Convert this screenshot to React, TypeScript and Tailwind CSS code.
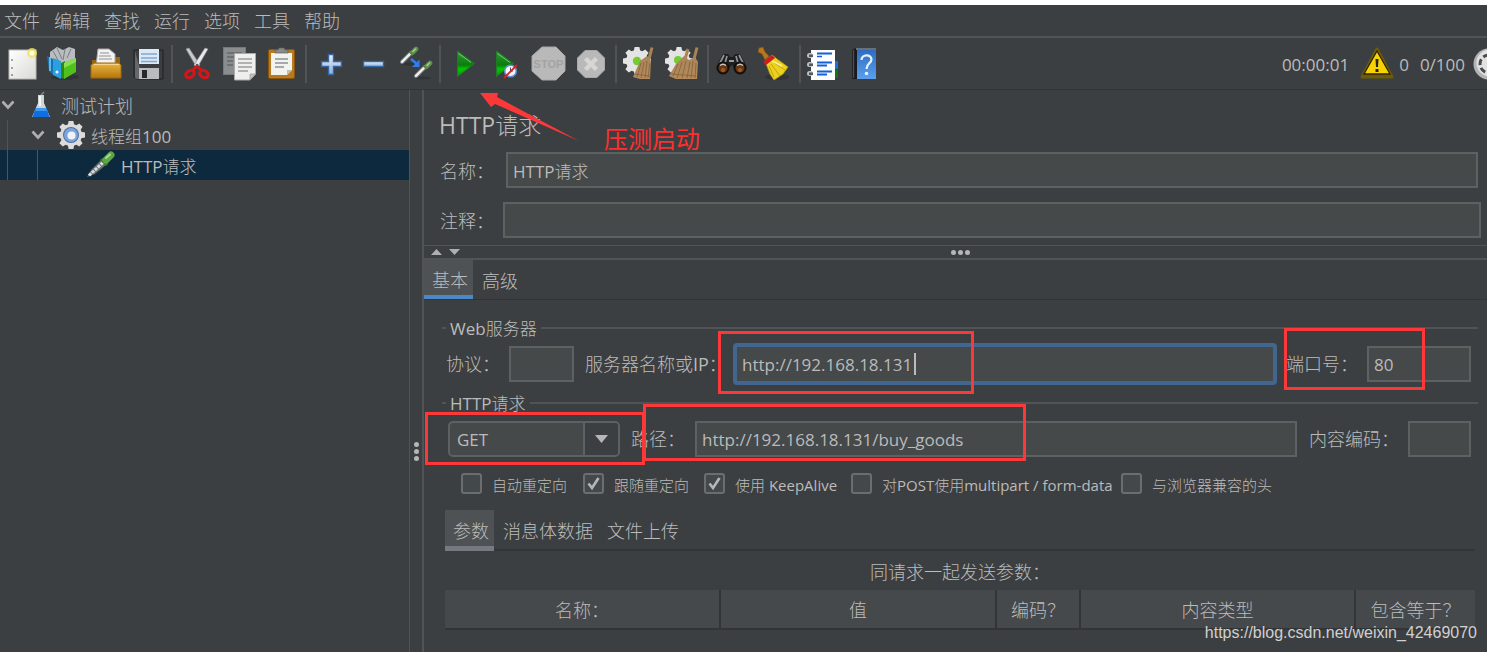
import React from "react";

type Kids = { children: React.ReactNode };

function Icon({ children }: Kids) {
  return (
    <svg width="36" height="36" viewBox="0 0 36 36" aria-hidden="true" className="shrink-0">
      {children}
    </svg>
  );
}

function Gradients() {
  return (
    <svg width="0" height="0" className="absolute" aria-hidden="true">
      <defs>
        <linearGradient id="paper" x1="0" y1="0" x2="1" y2="1">
          <stop offset="0" stopColor="#ffffff" />
          <stop offset="1" stopColor="#d9d9d5" />
        </linearGradient>
        <linearGradient id="green" x1="0" y1="0" x2="0" y2="1">
          <stop offset="0" stopColor="#2f9a35" />
          <stop offset="0.55" stopColor="#0a7d0a" />
          <stop offset="0.7" stopColor="#06c406" />
          <stop offset="1" stopColor="#0a8f0a" />
        </linearGradient>
        <linearGradient id="folder" x1="0" y1="0" x2="0" y2="1">
          <stop offset="0" stopColor="#e9b548" />
          <stop offset="1" stopColor="#b77508" />
        </linearGradient>
        <linearGradient id="steel" x1="0" y1="0" x2="0" y2="1">
          <stop offset="0" stopColor="#e8f0fa" />
          <stop offset="1" stopColor="#8db0dc" />
        </linearGradient>
        <linearGradient id="broom" x1="0" y1="0" x2="0" y2="1">
          <stop offset="0" stopColor="#a8855a" />
          <stop offset="1" stopColor="#b58a5b" />
        </linearGradient>
        <linearGradient id="book" x1="0" y1="0" x2="0" y2="1">
          <stop offset="0" stopColor="#2f6cc0" />
          <stop offset="1" stopColor="#5aa0ee" />
        </linearGradient>
      </defs>
    </svg>
  );
}

const gearTeeth = [0, 45, 90, 135, 180, 225, 270, 315];

function Gear({ cx, cy, r, fill = "#e4e4e4" }: { cx: number; cy: number; r: number; fill?: string }) {
  return (
    <g fill={fill}>
      <circle cx={cx} cy={cy} r={r * 0.78} />
      {gearTeeth.map((a) => (
        <path
          key={a}
          d={`M${cx - r * 0.25} ${cy - r * 0.6}L${cx - r * 0.17} ${cy - r}H${cx + r * 0.17}L${cx + r * 0.25} ${cy - r * 0.6}Z`}
          transform={`rotate(${a} ${cx} ${cy})`}
        />
      ))}
    </g>
  );
}

function Dropper({ x, y }: { x: number; y: number }) {
  return (
    <g transform={`translate(${x} ${y})`}>
      <ellipse cx="8" cy="17" rx="8" ry="1.5" fill="#2b2d2f" opacity="0.6" />
      <path d="M1 15L10 6" stroke="#6f7477" strokeWidth="4.4" strokeLinecap="round" />
      <path d="M1 14.800L10 5.800" stroke="#eceeee" strokeWidth="2.600" strokeLinecap="round" />
      <path d="M8.500 4.500L12 8" stroke="#4a7a3c" strokeWidth="2.400" />
      <path d="M11.500 5.500L15 2" stroke="#5d8f4c" strokeWidth="4.600" strokeLinecap="round" />
      <path d="M12 4.500L14.500 2" stroke="#a3cf8c" strokeWidth="1.600" strokeLinecap="round" />
    </g>
  );
}

const NewIcon = () => (
  <Icon>
    <rect x="6" y="4" width="27" height="29" fill="url(#paper)" stroke="#b9b9b5" />
    <path d="M9 13v2M9 21v2M9 28v2" stroke="#555" />
    <circle cx="29" cy="7" r="5" fill="#f0e35a" opacity="0.8" />
    <circle cx="29" cy="7" r="2.600" fill="#fffde0" />
  </Icon>
);

const TemplatesIcon = () => (
  <Icon>
    <ellipse cx="20" cy="31" rx="14" ry="3" fill="#2a2c2e" opacity="0.6" />
    <path d="M5 6L12 1L18 4L24 1L30 3V15L17 22L5 14Z" fill="#b9bdbf" />
    <path d="M8 5L13 14M12 2L17 13M20 3L18 14M26 3L22 12" stroke="#787d80" />
    <path d="M2 10L8 13V29L4 25Z" fill="#1672b0" />
    <path d="M8 12L16 15V33L8 29Z" fill="#2ba0e0" />
    <path d="M5 11V25" stroke="#7fd0f5" strokeWidth="1.500" />
    <circle cx="12" cy="26" r="1.500" fill="#eaf7ff" />
    <path d="M16 17L20 15V33L16 32Z" fill="#2c8a12" />
    <path d="M19 17L31 12V26L19 33Z" fill="#4fc01c" />
    <path d="M19 17L31 12V16L19 22Z" fill="#86df4e" />
  </Icon>
);

const OpenIcon = () => (
  <Icon>
    <path d="M5 14h6l2-3h20v14H5Z" fill="#9a6410" />
    <path d="M11 3H22L28 8V20H9Z" fill="#f3f3f1" stroke="#a9a9a5" />
    <path d="M13 7h9M12 10h12M12 13h13" stroke="#8f9294" />
    <path d="M7 17H32L34 19V32H4V19Z" fill="url(#folder)" stroke="#a26a0a" />
    <path d="M7 18.500H32" stroke="#f7d68a" />
  </Icon>
);

const SaveIcon = () => (
  <Icon>
    <path d="M5 4H34V33H7L5 31Z" fill="#3b3d40" stroke="#1f2022" />
    <path d="M6 5L14 33H7L6 32Z" fill="#77797b" opacity="0.7" />
    <rect x="10" y="3" width="20" height="15" fill="#dbe9f6" />
    <path d="M12 8H28M12 12H28M12 15.500H28" stroke="#84a8d0" strokeWidth="1.500" />
    <rect x="10" y="22" width="20" height="11" fill="#b9bbbd" />
    <rect x="13" y="24" width="5" height="8" fill="#26282a" />
  </Icon>
);

const CutIcon = () => (
  <Icon>
    <path d="M7 3L10 2L21 19L18 22Z" fill="#c9cbcb" stroke="#8d8f8f" strokeWidth="0.700" />
    <path d="M29 3L26 2L15 19L18 22Z" fill="#e8eaea" stroke="#8d8f8f" strokeWidth="0.700" />
    <ellipse cx="11" cy="28" rx="4.500" ry="3.400" transform="rotate(-30 11 28)" fill="none" stroke="#d3161a" strokeWidth="3.200" />
    <ellipse cx="25" cy="28" rx="4.500" ry="3.400" transform="rotate(30 25 28)" fill="none" stroke="#d3161a" strokeWidth="3.200" />
    <path d="M14 24L18 20L22 24" fill="none" stroke="#d3161a" strokeWidth="3" />
    <circle cx="18" cy="19" r="1.200" fill="#555" />
  </Icon>
);

const CopyIcon = () => (
  <Icon>
    <rect x="2.500" y="1.500" width="22" height="27" fill="#8b8e8e" stroke="#777a7a" />
    <path d="M6 7H21M6 11H14M6 15H12M6 19H12" stroke="#65686a" strokeWidth="1.500" />
    <path d="M13.500 7.500H34.500V28L29 34H13.500Z" fill="#efefed" stroke="#aaa" />
    <path d="M17 13H31M17 17H31M17 21H31M17 25H27" stroke="#9da0a0" strokeWidth="1.500" />
    <path d="M29 34V28H34.500Z" fill="#c3c3bf" stroke="#999" strokeWidth="0.700" />
  </Icon>
);

const PasteIcon = () => (
  <Icon>
    <rect x="5.500" y="3.500" width="26" height="29" rx="1.500" fill="#b9791f" stroke="#8a560d" />
    <path d="M8 7H29V24L24 29H8Z" fill="#f2f2ef" />
    <path d="M12 13H25M12 17H25M12 21H21" stroke="#8f9294" strokeWidth="1.500" />
    <path d="M24 29V24H29Z" fill="#bdbdb8" />
    <path d="M12 7V4H15L16 2H21L22 4H25V7Z" fill="#8a8c8a" stroke="#5c5e5c" strokeWidth="0.700" />
  </Icon>
);

const PlusIcon = () => (
  <Icon>
    <path
      d="M15.500 8.500H20.500V15.500H28.500V20.500H20.500V28.500H15.500V20.500H8.500V15.500H15.500Z"
      fill="url(#steel)"
      stroke="#3465a4"
      strokeWidth="1.400"
    />
  </Icon>
);

const MinusIcon = () => (
  <Icon>
    <rect x="8.500" y="15.500" width="20" height="5" fill="url(#steel)" stroke="#3465a4" strokeWidth="1.400" />
  </Icon>
);

const ToggleIcon = () => (
  <Icon>
    <Dropper x={4} y={1} />
    <Dropper x={18} y={15} />
    <path d="M14 13L20 18" stroke="#2f7df0" strokeWidth="2.600" />
    <path d="M22.500 13.500V21H15Z" fill="#2f7df0" />
  </Icon>
);

const StartIcon = () => (
  <Icon>
    <path d="M10.500 5L27.500 17.500L10.500 30.500Z" fill="url(#green)" stroke="#1f7a24" />
    <path d="M11.500 7.500L24 16.500" stroke="#7cc780" />
  </Icon>
);

const StartNoTimersIcon = () => (
  <Icon>
    <path d="M7.500 5L24.500 17.500L7.500 30.500Z" fill="url(#green)" stroke="#1f7a24" />
    <path d="M8.500 7.500L21 16.500" stroke="#7cc780" />
    <circle cx="21.500" cy="25" r="5.800" fill="#f4f6fa" stroke="#5a90cf" strokeWidth="1.600" />
    <path d="M21.500 21.500V25H24" stroke="#456" fill="none" />
    <path d="M15 32L28 19" stroke="#d3202a" strokeWidth="1.800" />
  </Icon>
);

const StopIcon = () => (
  <Icon>
    <path d="M11 1H25L34 10V25L25 34H11L1 25V10Z" fill="#b9b9b9" stroke="#a8a8a8" />
    <text x="17.500" y="22" textAnchor="middle" fontSize="11" fontWeight="700" fill="#a3a3a3" fontFamily="Liberation Sans, sans-serif">
      STOP
    </text>
  </Icon>
);

const ShutdownIcon = () => (
  <Icon>
    <path d="M12 4.500H24L31.500 12V24L24 31.500H12L4.500 24V12Z" fill="#b9b9b9" stroke="#a8a8a8" />
    <path d="M12.500 12.500L23.500 23.500M23.500 12.500L12.500 23.500" stroke="#d6d6d6" strokeWidth="4.500" />
  </Icon>
);

const ClearIcon = () => (
  <Icon>
    <Gear cx={14} cy={15} r={14} />
    <circle cx="14" cy="15" r="4.200" fill="#74cc33" />
    <path d="M29 1.500L25 17" stroke="#ab8352" strokeWidth="3" />
    <path d="M17 15L24 10L28 15L27 33L17 33L10 31Z" fill="url(#broom)" />
    <path d="M18 17L14 31M21 16L18 32M24 15L22 32M27 17L25 32M11 28L27 30" stroke="#7d5c36" strokeWidth="0.700" />
  </Icon>
);

const ClearAllIcon = () => (
  <Icon>
    <Gear cx={14} cy={15} r={14} />
    <circle cx="13" cy="14" r="4" fill="#74cc33" />
    <path d="M23 3L19 17M32 1.500L28 17" stroke="#ab8352" strokeWidth="3" />
    <path d="M11 18L19 10L24 14L30 11L33 16L32 33H11L4 30Z" fill="url(#broom)" />
    <path d="M13 18L8 30M17 16L12 32M21 15L17 32M25 16L22 32M28 15L26 32M31 17L30 32M6 28L31 30" stroke="#7d5c36" strokeWidth="0.700" />
  </Icon>
);

const SearchIcon = () => (
  <Icon>
    <path d="M8 8H13L15 11H18L20 8H25L30 17L22 25L17 19L11 25L3 17Z" fill="#1d1e20" />
    <path d="M9 9L5 17M12 10L10 17M21 10L23 17M24 9L28 17" stroke="#8f9394" strokeWidth="1.700" />
    <path d="M14 15h5" stroke="#9a9d9f" strokeWidth="2" />
    <circle cx="8" cy="22" r="5.500" fill="#6b3510" stroke="#0f0f10" strokeWidth="2" />
    <circle cx="25" cy="22" r="5.500" fill="#6b3510" stroke="#0f0f10" strokeWidth="2" />
    <path d="M5 19.500a4.500 4.500 0 0 1 6 0M22 19.500a4.500 4.500 0 0 1 6 0" fill="none" stroke="#c6c8c8" strokeWidth="1.400" />
    <circle cx="8" cy="24" r="2" fill="#a35a22" />
    <circle cx="25" cy="24" r="2" fill="#a35a22" />
  </Icon>
);

const ResetIcon = () => (
  <Icon>
    <ellipse cx="20" cy="31" rx="12" ry="3" fill="#2a2c2e" opacity="0.6" />
    <path d="M2 2L6 1L8 6L12 10L8 14L5 8L1 6Z" fill="#b9771d" stroke="#80510f" strokeWidth="0.700" />
    <path d="M8 15L15 9L20 13L31 21L26 28L17 34L13 28Z" fill="#ecd21f" stroke="#b99b0b" strokeWidth="0.800" />
    <path d="M16 16L28 24M14 18L23 30M12 20L17 31" stroke="#c2a410" />
    <path d="M6 16L15 9L18 12L9 19Z" fill="#cf1d1d" />
    <path d="M15 15L25 20" stroke="#fbf08d" strokeWidth="1.600" />
  </Icon>
);

const FunctionIcon = () => (
  <Icon>
    <rect x="27" y="15" width="4" height="8" fill="#1c6fe0" />
    <rect x="27" y="24" width="4" height="8" fill="#0a7a12" />
    <rect x="4" y="4" width="24" height="30" fill="#fdfdfd" />
    <path d="M10 7.500H25M10 16.500H25M10 25.500H25M10 19.500H20M10 28.500H20" stroke="#1560d8" strokeWidth="2" />
    <path d="M10 10.500H15" stroke="#1560d8" strokeWidth="1.500" />
    {[7, 16, 25].map((y) => (
      <g key={y}>
        <rect x="0" y={y} width="6" height="5" rx="2.500" fill="#bfc2c4" />
        <rect x="2" y={y + 1.5} width="4" height="2.500" fill="#55585a" />
      </g>
    ))}
  </Icon>
);

const HelpIcon = () => (
  <Icon>
    <path d="M3 4L7 2H27V33H3Z" fill="#18191b" />
    <rect x="8" y="4" width="19" height="29" fill="url(#book)" />
    <path d="M4.500 4V32" stroke="#4b4d50" strokeWidth="1.500" />
    <path d="M7 3H27" stroke="#b8c8d8" />
    <path d="M12.500 14C12.500 8 22.500 8 22.500 13.500C22.500 17.500 17.500 17 17.500 23" fill="none" stroke="#e6f1ff" strokeWidth="2.200" />
    <circle cx="17.500" cy="27.500" r="1.800" fill="#e6f1ff" />
  </Icon>
);

const toolGroups = [
  [
    ["新建", NewIcon],
    ["模板", TemplatesIcon],
    ["打开", OpenIcon],
    ["保存", SaveIcon],
  ],
  [
    ["剪切", CutIcon],
    ["复制", CopyIcon],
    ["粘贴", PasteIcon],
  ],
  [
    ["展开", PlusIcon],
    ["折叠", MinusIcon],
    ["切换", ToggleIcon],
  ],
  [
    ["启动", StartIcon],
    ["不停顿开始", StartNoTimersIcon],
    ["停止", StopIcon],
    ["关闭", ShutdownIcon],
  ],
  [
    ["清除", ClearIcon],
    ["清除全部", ClearAllIcon],
  ],
  [
    ["搜索", SearchIcon],
    ["重置搜索", ResetIcon],
  ],
  [
    ["函数助手", FunctionIcon],
    ["帮助", HelpIcon],
  ],
] as [string, () => React.ReactElement][][];

function Toolbar() {
  return (
    <div className="flex h-[52px] items-center overflow-hidden border-b border-[#323436]">
      {toolGroups.map((group, i) => (
        <React.Fragment key={i}>
          {i > 0 && <span className="mx-[3px] h-[38px] w-[2px] shrink-0 bg-[#515354]" />}
          {group.map(([label, Glyph]) => (
            <button key={label} type="button" aria-label={label} className="flex w-[42px] shrink-0 justify-center">
              <Glyph />
            </button>
          ))}
        </React.Fragment>
      ))}
      <div className="ml-auto flex shrink-0 items-center text-[17px]">
        <span className="pt-[2px]">00:00:01</span>
        <svg width="34" height="34" viewBox="0 0 34 34" className="ml-[11px] mr-[5px]" aria-hidden="true">
          <path d="M17 2L32 30H2Z" fill="#6d5c05" stroke="#6d5c05" strokeWidth="3" strokeLinejoin="round" />
          <path d="M17 4L30 27H4Z" fill="#f8d200" stroke="#2c2504" strokeWidth="1.300" />
          <path d="M15.500 12H18.500L18 20H16Z" fill="#222" />
          <rect x="15.500" y="22" width="3" height="3" fill="#222" />
        </svg>
        <span className="mr-[11px] pt-[2px]">0</span>
        <span className="mr-[8px] pt-[2px]">0/100</span>
        <span className="block w-[14px] overflow-hidden">
          <svg width="32" height="34" viewBox="0 0 32 34" aria-hidden="true">
            <circle cx="16" cy="17" r="15.500" fill="#b4b4b4" />
            <circle cx="17" cy="16" r="13.500" fill="#e2e2e2" />
            <circle cx="16" cy="17" r="9" fill="none" stroke="#4b4b4b" strokeWidth="3" strokeDasharray="6 3" />
          </svg>
        </span>
      </div>
    </div>
  );
}

function Chevron() {
  return (
    <svg width="14" height="10" viewBox="0 0 14 10" aria-hidden="true" className="shrink-0">
      <path d="M1.500 1.500L7 7.500L12.500 1.500" fill="none" stroke="#adafb1" strokeWidth="2.600" />
    </svg>
  );
}

function Tree() {
  return (
    <aside className="w-[410px] shrink-0 border-r border-[#515354]">
      <ul>
        <li className="flex h-[30px] items-center pl-[1px]">
          <Chevron />
          <svg width="20" height="28" viewBox="0 0 20 28" aria-hidden="true" className="ml-[16px] mr-[10px]">
            <path d="M10 4L13 1" stroke="#8a8a8a" strokeWidth="1.500" />
            <path d="M7 4H13V12L19 26H1L7 12Z" fill="#cfd6da" />
            <path d="M4.500 17H15.500L18.500 26H1.500Z" fill="#0f6fe0" />
            <path d="M5 17H15L16 20H4Z" fill="#3f9af0" />
            <path d="M9 5V15" stroke="#fff" strokeWidth="1.500" />
          </svg>
          <span className="pt-[3px] text-[18px]">测试计划</span>
        </li>
        <li className="flex h-[30px] items-center">
          <span className="ml-[7px] h-full w-px bg-[#515354]" />
          <span className="ml-[23px] flex">
            <Chevron />
          </span>
          <svg width="28" height="28" viewBox="0 0 28 28" aria-hidden="true" className="ml-[12px] mr-[6px]">
            <Gear cx={14} cy={14} r={14} fill="#dcdcdc" />
            <circle cx="14" cy="14" r="8" fill="#4a6fa8" />
            <circle cx="14" cy="14" r="7" fill="#7fa3d8" />
            <circle cx="14.500" cy="14.500" r="4" fill="#eef3fa" />
          </svg>
          <span className="pt-[3px] text-[17px]">线程组100</span>
        </li>
        <li className="flex h-[30px] items-center bg-[#0d293e]">
          <span className="ml-[7px] h-full w-px bg-[#515354]" />
          <span className="ml-[29px] h-full w-px bg-[#515354]" />
          <svg width="30" height="28" viewBox="0 0 30 28" aria-hidden="true" className="ml-[48px] mr-[5px]">
            <path d="M1 26L5 19L16 8L21 13L9 23Z" fill="#6b7073" />
            <path d="M3 24.500L18 10.500" stroke="#dadddd" strokeWidth="3" strokeDasharray="3 1" />
            <path d="M15 8L21 14" stroke="#3f7a31" strokeWidth="3" />
            <path d="M20 9L25 4" stroke="#5da645" strokeWidth="7" strokeLinecap="round" />
            <path d="M20 7L24 3.500" stroke="#a5dc8d" strokeWidth="2" strokeLinecap="round" />
          </svg>
          <span className="pt-[3px] text-[17px]">HTTP请求</span>
        </li>
      </ul>
    </aside>
  );
}

function Dots({ vertical = false }: { vertical?: boolean }) {
  return (
    <span className={vertical ? "flex flex-col gap-[2px]" : "flex gap-[2px]"}>
      <i className="size-[5px] rounded-full bg-[#b4b6b8]" />
      <i className="size-[5px] rounded-full bg-[#b4b6b8]" />
      <i className="size-[5px] rounded-full bg-[#b4b6b8]" />
    </span>
  );
}

const field = "h-[36px] border-2 border-[#5e6162] bg-[#45494a] px-[5px] text-[17px] outline-none";

function GroupTitle({ children }: Kids) {
  return (
    <div className="flex h-[24px] items-center pl-[18px] pr-[9px] text-[17px]">
      <span className="h-[2px] w-[4px] bg-[#515354]" />
      <h2 className="mx-[4px] pt-[2px] leading-[24px]">{children}</h2>
      <span className="h-[2px] flex-1 bg-[#515354]" />
    </div>
  );
}

function Check({ label, checked = false }: { label: string; checked?: boolean }) {
  return (
    <label className="flex h-[21px] items-center gap-[10px] whitespace-nowrap">
      <span className="relative flex">
        <input
          type="checkbox"
          defaultChecked={checked}
          className="peer size-[21px] appearance-none rounded-[3px] border-2 border-[#6b6e6f] bg-[#43494a]"
        />
        <svg viewBox="0 0 21 21" aria-hidden="true" className="pointer-events-none absolute inset-0 hidden peer-checked:block">
          <path d="M5.500 10.500L9 15L15.500 5" fill="none" stroke="#b4b6b8" strokeWidth="2.600" />
        </svg>
      </span>
      <span className="pt-[2px]">{label}</span>
    </label>
  );
}

const columns: [string, string][] = [
  ["名称：", "w-[275px]"],
  ["值", "w-[276px]"],
  ["编码？", "w-[84px]"],
  ["内容类型", "w-[275px]"],
  ["包含等于？", "w-[120px]"],
];

function Sampler() {
  return (
    <main className="min-w-0 flex-1 border-l-2 border-[#515354]">
      <h1 className="pl-[15px] pt-[17px] text-[23px] leading-[36px]">HTTP请求</h1>
      <div className="mt-[9px] flex items-center pl-[16px] pr-[9px]">
        <label htmlFor="name" className="w-[66px] pt-[2px] text-[18px]">名称：</label>
        <input id="name" defaultValue="HTTP请求" className={`${field} min-w-0 flex-1`} />
      </div>
      <div className="mt-[14px] flex items-center pl-[16px] pr-[6px]">
        <label htmlFor="comment" className="w-[63px] pt-[2px] text-[18px]">注释：</label>
        <input id="comment" className={`${field} min-w-0 flex-1`} />
      </div>

      <div className="mt-[7px] flex h-[15px] items-center border-b-2 border-t border-[#515354] pl-[7px]">
        <svg width="30" height="8" viewBox="0 0 30 8" aria-hidden="true">
          <path d="M0 7L5.500 1L11 7ZM18 1H29L23.500 7Z" fill="#adafb1" />
        </svg>
        <div className="flex flex-1 justify-center pr-[28px]">
          <Dots />
        </div>
      </div>

      <div role="tablist" className="flex h-[40px] border-b border-[#323436] text-[18px]">
        <button role="tab" type="button" aria-selected="true" className="border-b-4 border-[#4a88c7] bg-[#4e5254] pl-[8px] pr-[5px] pt-[6px]">
          基本
        </button>
        <button role="tab" type="button" aria-selected="false" className="px-[9px] pt-[3px]">
          高级
        </button>
      </div>

      <section className="mt-[16px]">
        <GroupTitle>Web服务器</GroupTitle>
        <div className="mt-[3px] flex h-[42px] items-center pl-[22px] pr-[16px] text-[18px]">
          <label htmlFor="protocol" className="w-[63px] shrink-0 pt-[1px]">协议：</label>
          <input id="protocol" className={`${field} w-[65px]`} />
          <label htmlFor="server" className="ml-[11px] w-[148px] shrink-0 whitespace-nowrap pt-[1px]">服务器名称或IP：</label>
          <div className="flex h-[42px] min-w-0 flex-1 items-center rounded-[4px] border-4 border-[#41668f] bg-[#45494a] px-[5px] text-[17px]">
            <input
              id="server"
              defaultValue="http://192.168.18.131"
              size={1}
              className="w-[172px] bg-transparent pt-[1px] outline-none"
            />
            <span className="h-[22px] w-[2px] bg-[#bbbbbb]" />
          </div>
          <label htmlFor="port" className="ml-[9px] w-[81px] shrink-0 pt-[1px]">端口号：</label>
          <input id="port" defaultValue="80" className={`${field} w-[104px]`} />
        </div>
      </section>

      <section className="mt-[6px]">
        <GroupTitle>HTTP请求</GroupTitle>
        <div className="mt-[6px] flex h-[36px] items-center pl-[24px] pr-[16px] text-[18px]">
          <div className="relative flex w-[172px] shrink-0">
            <select
              aria-label="方法"
              className="h-[36px] w-full appearance-none rounded-[5px] border-2 border-[#5e6162] bg-[#45494a] px-[7px] pt-[1px] text-[17px] outline-none"
            >
              <option>GET</option>
              <option>POST</option>
            </select>
            <span className="pointer-events-none absolute bottom-[2px] right-[2px] top-[2px] flex w-[35px] items-center justify-center rounded-r-[3px] border-l-2 border-[#5e6162] bg-[#3c3f41]">
              <svg width="13" height="8" viewBox="0 0 13 8" aria-hidden="true">
                <path d="M0 0H13L6.500 8Z" fill="#b4b6b8" />
              </svg>
            </span>
          </div>
          <label htmlFor="path" className="ml-[11px] w-[64px] shrink-0 pt-[1px]">路径：</label>
          <input id="path" defaultValue="http://192.168.18.131/buy_goods" className={`${field} min-w-0 flex-1`} />
          <label htmlFor="encoding" className="ml-[12px] w-[99px] shrink-0 pt-[1px]">内容编码：</label>
          <input id="encoding" className={`${field} w-[63px]`} />
        </div>
        <div className="mt-[16px] grid h-[21px] grid-cols-[122px_121px_147px_270px_auto] items-center pl-[37px] text-[15px] leading-[20px]">
          <Check label="自动重定向" />
          <Check label="跟随重定向" checked />
          <Check label="使用 KeepAlive" checked />
          <Check label="对POST使用multipart / form-data" />
          <Check label="与浏览器兼容的头" />
        </div>
      </section>

      <section className="mt-[16px] pl-[21px] pr-[12px]">
        <div role="tablist" className="flex h-[41px] border-b-2 border-[#323436] text-[18px]">
          <button role="tab" type="button" aria-selected="true" className="-mb-[2px] border-b-[5px] border-[#747a80] bg-[#4e5254] pl-[8px] pr-[5px] pt-[6px]">
            参数
          </button>
          <button role="tab" type="button" aria-selected="false" className="pl-[9px] pr-[7px] pt-[3px]">
            消息体数据
          </button>
          <button role="tab" type="button" aria-selected="false" className="px-[7px] pt-[3px]">
            文件上传
          </button>
        </div>
        <p className="mt-[9px] text-center text-[18px] leading-[24px]">同请求一起发送参数：</p>
        <table className="mt-[6px] w-full table-fixed border-collapse text-[18px]">
          <thead>
            <tr className="h-[39px] border-b-2 border-[#323436] bg-[#45494b]">
              {columns.map(([name, width]) => (
                <th key={name} className={`${width} border-r-2 border-[#323436] px-0 pb-0 pt-[3px] font-normal last:border-r-0`}>
                  {name}
                </th>
              ))}
            </tr>
          </thead>
        </table>
      </section>
    </main>
  );
}

function Annotations() {
  const box = "absolute border-[3px] border-[#fd3838]";
  return (
    <div className="pointer-events-none absolute inset-x-0 -top-[5px] bottom-0 overflow-hidden">
      <div className={`${box} left-[718px] top-[331px] h-[63px] w-[256px]`} />
      <div className={`${box} right-[62px] top-[328px] h-[62px] w-[141px]`} />
      <div className={`${box} left-[425px] top-[412px] h-[53px] w-[220px]`} />
      <div className={`${box} left-[643px] top-[404px] h-[57px] w-[383px]`} />
      <svg width="100" height="50" viewBox="0 0 100 50" aria-hidden="true" className="absolute left-[480px] top-[92px]">
        <path d="M0 1L18 1L17 5L99 49L15 12L11 15Z" fill="#fd3838" />
      </svg>
      <p className="absolute left-[604px] top-[120px] font-['Noto_Sans_CJK_SC',sans-serif] text-[24px] leading-[36px] text-[#fd2f2f]">
        压测启动
      </p>
      <p className="absolute right-[10px] top-[622px] font-['Liberation_Sans',sans-serif] text-[16px] leading-[22px] text-[#d0d0d0]">
        https://blog.csdn.net/weixin_42469070
      </p>
    </div>
  );
}

export default function App() {
  return (
    <div className="relative flex min-h-screen flex-col border-t-[5px] border-white bg-[#3c3f41] font-['Open_Sans','Noto_Sans_CJK_SC_Light','Noto_Sans_CJK_SC',sans-serif] text-[#bbbbbb]">
      <Gradients />
      <nav className="flex h-[33px] items-center gap-[14px] border-b-2 border-[#515354] pl-[4px] pt-[2px] text-[18px]">
        {["文件", "编辑", "查找", "运行", "选项", "工具", "帮助"].map((m) => (
          <button key={m} type="button">
            {m}
          </button>
        ))}
      </nav>
      <Toolbar />
      <div className="flex flex-1">
        <Tree />
        <div className="flex w-[12px] shrink-0 justify-center pt-[352px]">
          <Dots vertical />
        </div>
        <Sampler />
      </div>
      <Annotations />
    </div>
  );
}
